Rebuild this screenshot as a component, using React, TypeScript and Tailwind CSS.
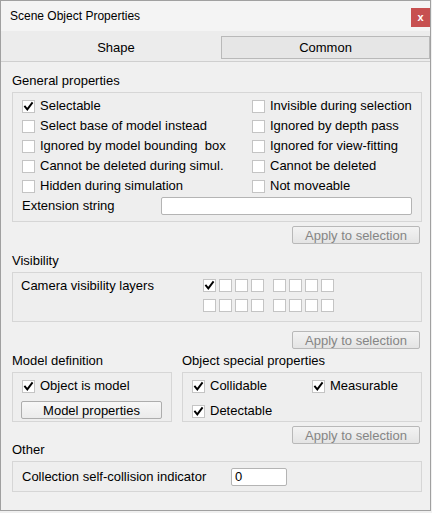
import React from "react";

function Check({ checked = false }: { checked?: boolean }) {
  return (
    <div className="w-[13px] h-[13px] shrink-0 border border-[#c4c4c4] bg-white flex items-center justify-center">
      {checked && (
        <svg width="11" height="11" viewBox="0 0 11 11">
          <path
            d="M2 5.6 L4.3 8.4 L9 2.2"
            fill="none"
            stroke="#000"
            strokeWidth="1.9"
            strokeLinecap="square"
          />
        </svg>
      )}
    </div>
  );
}

function CheckRow({ label, checked }: { label: string; checked?: boolean }) {
  return (
    <div className="flex items-center gap-[5px] h-[20px]">
      <Check checked={checked} />
      <span className="whitespace-pre">{label}</span>
    </div>
  );
}

function ApplyButton() {
  return (
    <div className="self-end mr-[2px] w-[128px] h-[18px] border border-[#b8b8b8] rounded-[2px] bg-gradient-to-b from-[#f3f3f3] to-[#e4e4e4] text-[#858585] flex items-center justify-center leading-none">
      Apply to selection
    </div>
  );
}

function SectionLabel({ children }: { children: React.ReactNode }) {
  return <div className="h-[14px] leading-[14px] whitespace-nowrap">{children}</div>;
}

function LayerGrid({ first }: { first: boolean }) {
  return (
    <div className="flex gap-[9px]">
      <div className="flex gap-[3px]">
        <Check checked={first} />
        <Check />
        <Check />
        <Check />
      </div>
      <div className="flex gap-[3px]">
        <Check />
        <Check />
        <Check />
        <Check />
      </div>
    </div>
  );
}

export default function App() {
  return (
    <div className="w-[432px] h-[513px] bg-[#f0f0f0] font-['Liberation_Sans',Arial,sans-serif] text-[13px] text-black">
      <div className="w-[431px] h-[511px] border border-[#a0a0a0] flex flex-col bg-[#f0f0f0]">
        {/* title bar */}
        <div className="h-[30px] shrink-0 bg-[#f4f4f4] flex items-center justify-between pl-[9px]">
          <span className="text-[12px]">Scene Object Properties</span>
          <div className="w-[19px] h-[19px] mt-[2px] bg-[#c75050] text-white text-[11px] font-bold flex items-center justify-center leading-none">
            x
          </div>
        </div>

        {/* tabs */}
        <div className="h-[31px] shrink-0 bg-[#ececec] border-b border-[#cfcfcf] flex items-start pt-[5px]">
          <div className="w-[220px] h-[23px] flex items-center justify-center pl-[10px] pt-[1px]">Shape</div>
          <div className="flex-1 h-[23px] border border-[#b9b9b9] bg-[#e6e6e6] flex items-center justify-center pt-[1px]">
            Common
          </div>
        </div>

        {/* content */}
        <div className="flex flex-col pl-[11px] pr-[8px]">
          <div className="mt-[12px]">
            <SectionLabel>General properties</SectionLabel>
          </div>
          <div className="mt-[4px] h-[130px] border border-[#d6d6d6] bg-[#eeeeee] pt-[3px] pl-[9px]">
            <div className="grid grid-cols-[230px_1fr]">
              <CheckRow label="Selectable" checked />
              <CheckRow label="Invisible during selection" />
              <CheckRow label="Select base of model instead" />
              <CheckRow label="Ignored by depth pass" />
              <CheckRow label="Ignored by model bounding  box" />
              <CheckRow label="Ignored for view-fitting" />
              <CheckRow label="Cannot be deleted during simul." />
              <CheckRow label="Cannot be deleted" />
              <CheckRow label="Hidden during simulation" />
              <CheckRow label="Not moveable" />
            </div>
            <div className="flex items-center h-[20px]">
              <span className="w-[139px]">Extension string</span>
              <div className="w-[251px] h-[18px] border border-[#b4b4b4] rounded-[2px] bg-white" />
            </div>
          </div>
          <div className="mt-[4px] flex flex-col">
            <ApplyButton />
          </div>

          <div className="mt-[10px]">
            <SectionLabel>Visibility</SectionLabel>
          </div>
          <div className="mt-[4px] h-[50px] border border-[#d6d6d6] bg-[#eeeeee] pt-[6px] pl-[8px] flex">
            <div className="w-[182px] h-[13px] flex items-center whitespace-nowrap">Camera visibility layers</div>
            <div className="flex flex-col gap-[7px]">
              <LayerGrid first />
              <LayerGrid first={false} />
            </div>
          </div>
          <div className="mt-[9px] flex flex-col">
            <ApplyButton />
          </div>

          <div className="mt-[5px] flex gap-[10px]">
            <div className="w-[160px] flex flex-col">
              <SectionLabel>Model definition</SectionLabel>
              <div className="mt-[4px] h-[50px] border border-[#d6d6d6] bg-[#eeeeee] pt-[3px] pl-[9px]">
                <CheckRow label="Object is model" checked />
                <div className="mt-[5px] -ml-[1px] w-[141px] h-[18px] border border-[#adadad] rounded-[2px] bg-gradient-to-b from-[#f7f7f7] to-[#ebebeb] flex items-center justify-center leading-none">
                  Model properties
                </div>
              </div>
            </div>
            <div className="flex-1 flex flex-col">
              <SectionLabel>Object special properties</SectionLabel>
              <div className="mt-[4px] h-[50px] border border-[#d6d6d6] bg-[#eeeeee] pt-[3px] pl-[9px]">
                <div className="grid grid-cols-[120px_1fr] gap-y-[5px]">
                  <CheckRow label="Collidable" checked />
                  <CheckRow label="Measurable" checked />
                  <CheckRow label="Detectable" checked />
                </div>
              </div>
            </div>
          </div>
          <div className="mt-[4px] flex flex-col">
            <ApplyButton />
          </div>

          <div className="-mt-[1px]">
            <SectionLabel>Other</SectionLabel>
          </div>
          <div className="mt-[4px] h-[31px] border border-[#d6d6d6] bg-[#eeeeee] pl-[9px] flex items-center">
            <span className="w-[209px] whitespace-nowrap">Collection self-collision indicator</span>
            <div className="w-[56px] h-[18px] border border-[#b4b4b4] rounded-[2px] bg-white flex items-center pl-[3px] leading-none">
              0
            </div>
          </div>
        </div>
      </div>
    </div>
  );
}
